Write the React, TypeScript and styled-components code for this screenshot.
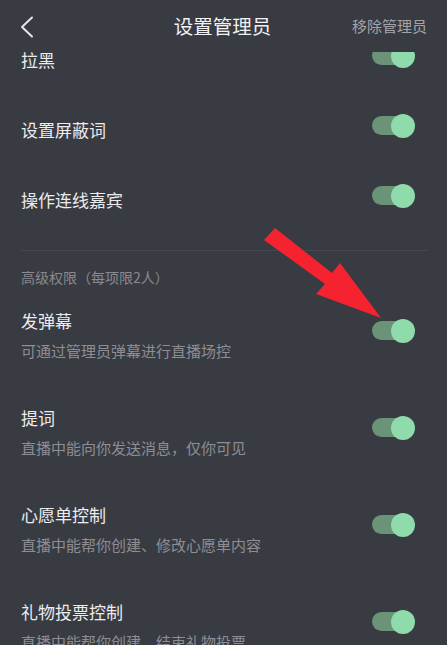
import React from "react";
import styled, { createGlobalStyle } from "styled-components";

const Global = createGlobalStyle`
  html, body { margin: 0; padding: 0; background: #393b42; }
  body { font-family: "Noto Sans CJK SC", "Noto Sans", sans-serif; }
  * { box-sizing: border-box; }
`;

const Page = styled.div`
  position: relative;
  width: 447px;
  height: 645px;
  overflow: hidden;
  background: #393b42;
  display: flex;
  flex-direction: column;
`;

const Header = styled.header`
  position: relative;
  z-index: 2;
  height: 52px;
  flex: 0 0 52px;
  background: #393b42;
  display: grid;
  grid-template-columns: 100px 1fr 100px;
  align-items: center;
  padding: 0 20px 0 18px;
`;

const BackButton = styled.div`
  display: flex;
  align-items: center;
  height: 30px;
  padding-top: 2px;
`;

const Title = styled.h1`
  margin: 0;
  text-align: center;
  font-size: 19.5px;
  font-weight: 400;
  color: #f1f1f3;
  line-height: 26px;
`;

const HeaderAction = styled.div`
  text-align: right;
  font-size: 15px;
  color: #a3a4a9;
  white-space: nowrap;
  line-height: 22px;
`;

const List = styled.main`
  margin-top: -27px;
  display: flex;
  flex-direction: column;
`;

const Row = styled.div<{ $sub?: boolean }>`
  display: flex;
  align-items: center;
  justify-content: space-between;
  padding: ${(p) => (p.$sub ? "10px 32px 35px 21px" : "0 32px 0 21px")};
  height: ${(p) => (p.$sub ? "97px" : "70px")};
`;

const TextBlock = styled.div`
  display: flex;
  flex-direction: column;
  gap: 8px;
`;

const Label = styled.div`
  font-size: 17px;
  line-height: 24px;
  color: #ececee;
`;

const Sub = styled.div`
  font-size: 15px;
  line-height: 20px;
  color: #8d8e94;
`;

const Divider = styled.hr`
  margin: 15px 19px 0 21px;
  border: none;
  height: 1px;
  background: #464850;
`;

const SectionLabel = styled.div`
  padding: 16px 21px 0;
  margin-bottom: 12px;
  font-size: 14px;
  line-height: 20px;
  color: #898a90;
`;

const Switch = styled.div`
  position: relative;
  width: 43px;
  height: 24px;
  margin-bottom: 9px;
  flex: 0 0 auto;
`;

const Track = styled.div`
  position: absolute;
  left: 0;
  top: 2.5px;
  width: 38px;
  height: 19px;
  border-radius: 10px;
  background: #6a9378;
`;

const Thumb = styled.div`
  position: absolute;
  right: 0;
  top: 0;
  width: 24px;
  height: 24px;
  border-radius: 50%;
  background: #8fdbab;
`;

const Arrow = styled.svg`
  position: absolute;
  left: 0;
  top: 0;
  z-index: 3;
  pointer-events: none;
`;

const Toggle = () => (
  <Switch>
    <Track />
    <Thumb />
  </Switch>
);

const simple = ["拉黑", "设置屏蔽词", "操作连线嘉宾"];
const advanced = [
  { t: "发弹幕", s: "可通过管理员弹幕进行直播场控" },
  { t: "提词", s: "直播中能向你发送消息，仅你可见" },
  { t: "心愿单控制", s: "直播中能帮你创建、修改心愿单内容" },
  { t: "礼物投票控制", s: "直播中能帮你创建、结束礼物投票" },
];

export default function App() {
  return (
    <Page>
      <Global />
      <Header>
        <BackButton>
          <svg width="16" height="22" viewBox="0 0 16 22">
            <path d="M14 1.5 L4 11 L14 20.5" fill="none" stroke="#e6e6e8" strokeWidth="2" strokeLinecap="round" strokeLinejoin="round" />
          </svg>
        </BackButton>
        <Title>设置管理员</Title>
        <HeaderAction>移除管理员</HeaderAction>
      </Header>
      <List>
        {simple.map((t) => (
          <Row key={t}>
            <Label>{t}</Label>
            <Toggle />
          </Row>
        ))}
        <Divider />
        <SectionLabel>高级权限（每项限2人）</SectionLabel>
        {advanced.map((r) => (
          <Row key={r.t} $sub>
            <TextBlock>
              <Label>{r.t}</Label>
              <Sub>{r.s}</Sub>
            </TextBlock>
            <Toggle />
          </Row>
        ))}
      </List>
      <Arrow width="447" height="645" viewBox="0 0 447 645">
        <polygon
          points="275,228 332,273 340,263 381,318 316,294 325,284 264,240"
          fill="#f5222f"
        />
      </Arrow>
    </Page>
  );
}
